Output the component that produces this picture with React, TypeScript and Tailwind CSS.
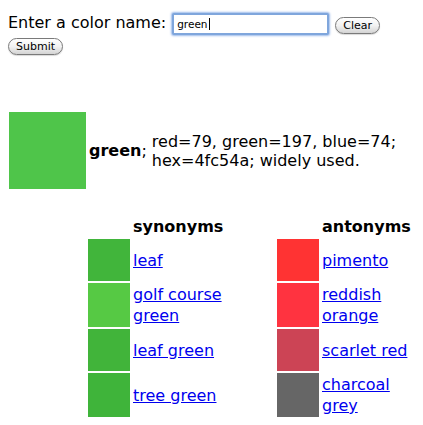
const synonyms = [
  { name: 'leaf', color: '#41b53b' },
  { name: 'golf course green', color: '#56c944' },
  { name: 'leaf green', color: '#41b43a' },
  { name: 'tree green', color: '#3fb43a' },
];

const antonyms = [
  { name: 'pimento', color: '#ff3333' },
  { name: 'reddish orange', color: '#ff3340' },
  { name: 'scarlet red', color: '#cc4455' },
  { name: 'charcoal grey', color: '#666666' },
];

function Button({ label, className }: { label: string; className?: string }) {
  return (
    <button
      type="button"
      className={
        'h-[17px] rounded-full border border-[#7a7a7a] bg-gradient-to-b from-white via-[#f2f2f2] to-[#d4d4d4] text-[11px] leading-none text-black shadow-[0_1px_1px_rgba(0,0,0,0.15)] ' +
        (className ?? '')
      }
    >
      {label}
    </button>
  );
}

export default function App() {
  return (
    <div className="min-h-[425px] bg-white px-[8px] pt-[13px] font-['DejaVu_Sans',sans-serif] text-[16px] leading-[19px] text-black">
      {/* Form */}
      <div className="flex items-start">
        <label className="whitespace-nowrap">Enter a color name:</label>
        <div className="ml-[6px] flex h-[22px] w-[157px] items-center rounded-[2px] border-2 border-[#7fa6dc] bg-white pl-[3px] shadow-[0_0_2px_1px_rgba(90,140,220,0.6)]">
          <span className="text-[10.5px] leading-none">green</span>
          <span className="ml-px h-[12px] w-px bg-black" />
        </div>
        <Button label="Clear" className="ml-[6px] mt-[4px] w-[45px]" />
      </div>
      <Button label="Submit" className="mt-[2px] w-[55px]" />

      {/* Main colour */}
      <div className="mt-[57px] flex items-center">
        <div className="ml-px h-[77px] w-[77px] bg-[#4fc54a]" />
        <div className="ml-[3px] whitespace-nowrap">
          <b>green</b>;
        </div>
        <div className="ml-[5px]">
          <div>red=79, green=197, blue=74;</div>
          <div>hex=4fc54a; widely used.</div>
        </div>
      </div>

      {/* Synonyms / antonyms */}
      <div className="ml-[80px] mt-[28px] grid grid-cols-[42px_143px_42px_92px] gap-[2px]">
        <div />
        <div className="pl-px font-bold leading-[20px]">synonyms</div>
        <div />
        <div className="pl-px font-bold leading-[20px]">antonyms</div>
        {synonyms.map((s, i) => {
          const a = antonyms[i];
          return (
            <div key={s.name} className="contents">
              <div className="min-h-[42px]" style={{ backgroundColor: s.color }} />
              <div className="flex items-center py-px pl-px">
                <a href="#" className="max-w-[118px] leading-[21px] text-[#0000ee] underline">
                  {s.name}
                </a>
              </div>
              <div className="min-h-[42px]" style={{ backgroundColor: a.color }} />
              <div className="flex items-center py-px pl-px">
                <a href="#" className="max-w-[88px] leading-[21px] text-[#0000ee] underline">
                  {a.name}
                </a>
              </div>
            </div>
          );
        })}
      </div>
    </div>
  );
}
